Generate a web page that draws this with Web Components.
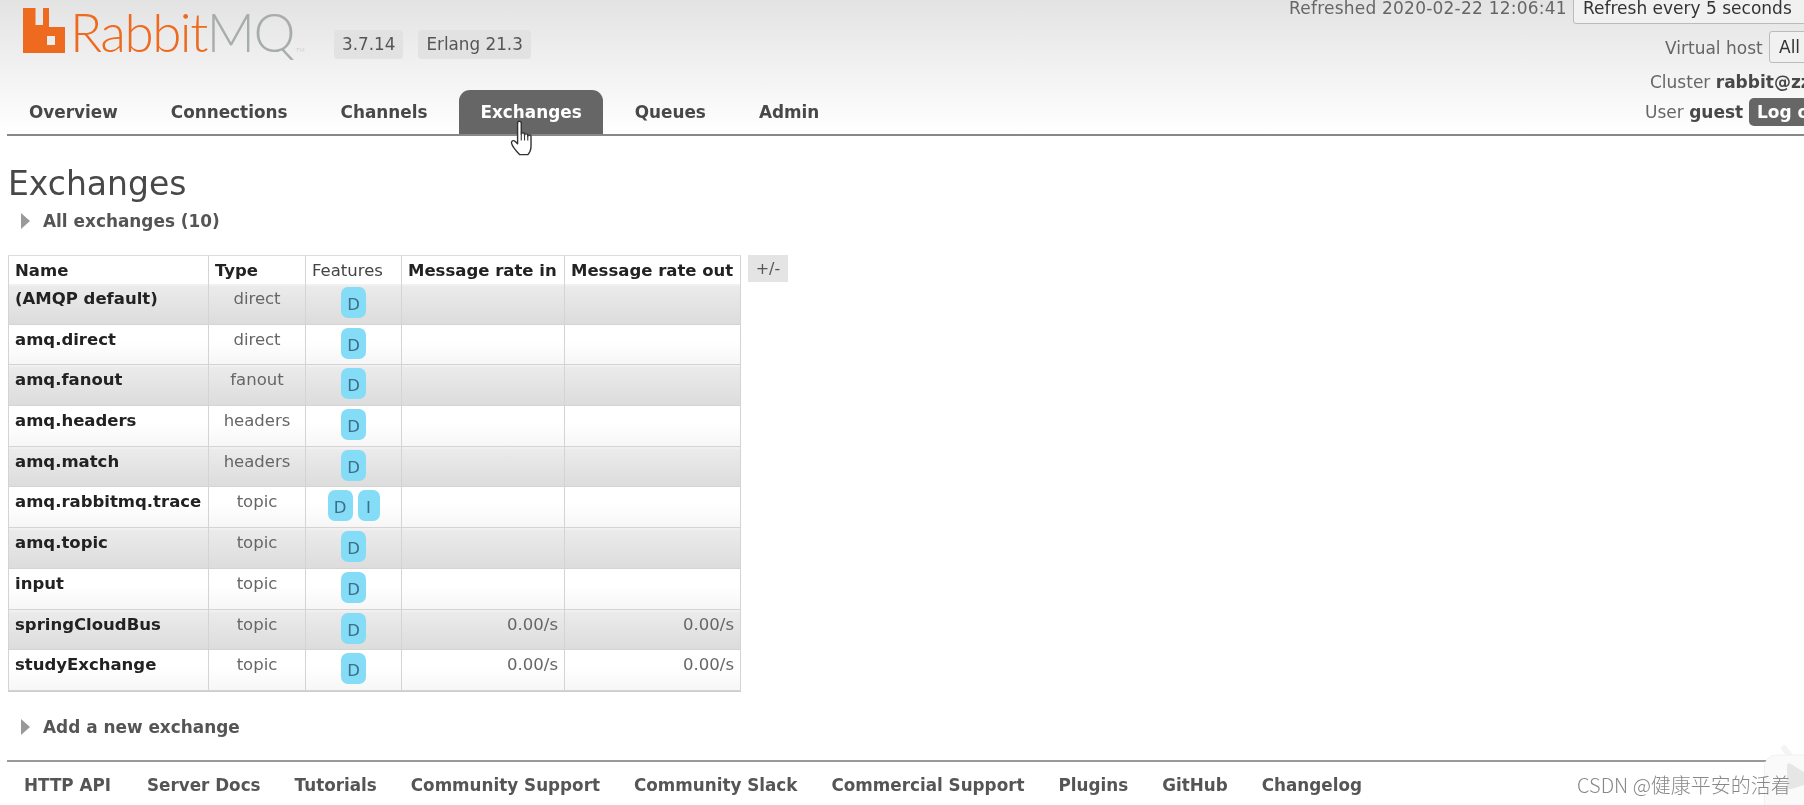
<!DOCTYPE html>
<html>
<head>
<meta charset="utf-8">
<title>RabbitMQ Management</title>
<style>
    html, body { margin: 0; height: 100%; background: #fff; overflow: hidden; }
    body { font-family: "DejaVu Sans", Verdana, sans-serif; color: #484848; filter: blur(0.35px); }
</style>
</head>
<body>
<rmq-header>
    <rmq-tab>Overview</rmq-tab>
    <rmq-tab>Connections</rmq-tab>
    <rmq-tab>Channels</rmq-tab>
    <rmq-tab active>Exchanges</rmq-tab>
    <rmq-tab>Queues</rmq-tab>
    <rmq-tab>Admin</rmq-tab>
</rmq-header>
<rmq-main></rmq-main>
<rmq-footer>
    <a>HTTP API</a><a>Server Docs</a><a>Tutorials</a><a>Community Support</a><a>Community Slack</a><a>Commercial Support</a><a>Plugins</a><a>GitHub</a><a>Changelog</a>
</rmq-footer>
<rmq-watermark>CSDN @健康平安的活着</rmq-watermark>

<script>
class RmqTab extends HTMLElement {
    constructor() {
        super();
        this.attachShadow({ mode: 'open' }).innerHTML = `
            <style>
                :host {
                    display: block;
                    height: 44px;
                    line-height: 44px;
                    padding: 0 21px;
                    margin-right: 11px;
                    font-size: 16.85px;
                    font-weight: bold;
                    color: #484848;
                    border-radius: 11px 11px 0 0;
                    white-space: nowrap;
                }
                :host([active]) { background: #666; color: #fff; }
            </style>
            <slot></slot>
        `;
    }
}
customElements.define('rmq-tab', RmqTab);

class RmqHeader extends HTMLElement {
    constructor() {
        super();
        this.attachShadow({ mode: 'open' }).innerHTML = `
            <style>
                :host {
                    display: block;
                    position: relative;
                    height: 134px;
                    margin: 0 0 0 7px;
                    border-bottom: 2px solid #888;
                }
                .bg {
                    position: absolute;
                    left: -7px; right: 0; top: 0; bottom: 0;
                    background: linear-gradient(#e3e3e3, #fff);
                }
                .top {
                    position: relative;
                    display: flex;
                    height: 90px;
                    align-items: flex-start;
                }
                .logo {
                    display: flex;
                    align-items: flex-start;
                    margin: 8px 0 0 16px;
                    height: 45px;
                    width: 311px;
                }
                .word {
                    font-family: "Lato", sans-serif;
                    font-weight: 300;
                    font-size: 53px;
                    line-height: 47px;
                    letter-spacing: -1.5px;
                    margin-left: 5px;
                    color: #ee6a1e;
                    white-space: nowrap;
                }
                .word span { color: #a8acac; }
                .word small { font-size: 6px; letter-spacing: 0; color: #bbb; margin-left: 2px; }
                .ver {
                    margin: 30px 15px 0 0;
                    font-size: 16.8px;
                    height: 29px;
                    line-height: 29px;
                    padding: 0 8px;
                    background: #e2e2e2;
                    border-radius: 4px;
                    color: #555;
                }
                .tabs {
                    position: relative;
                    display: flex;
                    padding-left: 1px;
                }
                .right {
                    position: absolute;
                    top: 0; right: 0;
                    left: 1240px;
                    bottom: 0;
                    overflow: hidden;
                    font-size: 17px;
                    line-height: 20px;
                    color: #666;
                }
                .line {
                    position: absolute;
                    white-space: nowrap;
                }
                .box {
                    display: inline-block;
                    background: #f1f1f1;
                    border: 1px solid #bbb;
                    border-radius: 3px;
                    color: #333;
                    padding: 0 9px;
                    line-height: 30px;
                }
                b { color: #484848; }
                .btn {
                    display: inline-block;
                    background: #666;
                    color: #fff;
                    font-weight: bold;
                    border-radius: 5px;
                    padding: 0 8px;
                    line-height: 28px;
                }
            </style>
            <div class="bg"></div>
            <div class="top">
                <div class="logo">
                    <svg width="42" height="45" viewBox="0 0 42 45"><path fill="#ee6a1e" fill-rule="evenodd" d="M0 0h12.500v17H20V0h6v19h16v26H0zM24 28v9h8v-9z"/></svg>
                    <div class="word">Rabbit<span>MQ</span><small>TM</small></div>
                </div>
                <div class="ver">3.7.14</div>
                <div class="ver">Erlang 21.3</div>
            </div>
            <div class="tabs"><slot></slot></div>
            <div class="right">
                <div class="line" style="left:42px;top:-2px;letter-spacing:.22px">Refreshed 2020-02-22 12:06:41</div>
                <div class="line" style="left:326px;top:-8px"><span class="box" style="width:230px;">Refresh every 5 seconds</span></div>
                <div class="line" style="left:418px;top:38px">Virtual host</div>
                <div class="line" style="left:522px;top:31px"><span class="box" style="width:80px;">All</span></div>
                <div class="line" style="left:403px;top:72px">Cluster <b>rabbit@zzz</b></div>
                <div class="line" style="left:398px;top:102px">User <b>guest</b></div>
                <div class="line" style="left:502px;top:98px"><span class="btn" style="width:70px;">Log out</span></div>
            </div>
        `;
    }
}
customElements.define('rmq-header', RmqHeader);

// One row of the exchanges table: the feature badges are a comma list
class RmqRow extends HTMLElement {
    connectedCallback() {
        const name = this.getAttribute('name');
        const type = this.getAttribute('type');
        const features = (this.getAttribute('features') || 'D').split(',');
        const rate = this.getAttribute('rate') || '';
        const odd = this.hasAttribute('odd');
        this.attachShadow({ mode: 'open' }).innerHTML = `
            <style>
                :host {
                    display: grid;
                    grid-template-columns: 201px 97px 96px 163px 176px;
                    height: 40.7px;
                    box-sizing: border-box;
                    font-size: 16.5px;
                    background: ${odd ? 'linear-gradient(#ececec 0%, #dcdcdc 100%)' : 'linear-gradient(#fff 40%, #f6f6f6 100%)'};
                    box-shadow: inset 0 -1px 0 #d4d4d4, inset 0 2px 0 ${odd ? '#f0f0f0' : '#fff'};
                }
                div { border-right: 1px solid #d4d4d4; padding: 6px 6px 0; line-height: 18px; white-space: nowrap; }
                .name { font-weight: bold; color: #222; border-left: 1px solid #d4d4d4; }
                .type { text-align: center; color: #666; }
                .feat { display: flex; justify-content: center; gap: 5px; padding: 3px 0 0; }
                .rate { text-align: right; color: #666; }
                span {
                    display: block;
                    width: 25px;
                    height: 31px;
                    line-height: 35px;
                    text-align: center;
                    background: #84dcf6;
                    color: #3f6f88;
                    border-radius: 7px;
                }
                span.narrow { width: 22px; }
            </style>
            <div class="name">${name}</div>
            <div class="type">${type}</div>
            <div class="feat">${features.map(f => `<span class="${f === 'I' ? 'narrow' : ''}">${f}</span>`).join('')}</div>
            <div class="rate">${rate}</div>
            <div class="rate">${rate}</div>
        `;
    }
}
customElements.define('rmq-row', RmqRow);

class RmqToggle extends HTMLElement {
    constructor() {
        super();
        this.attachShadow({ mode: 'open' }).innerHTML = `
            <style>
                :host {
                    display: flex;
                    align-items: center;
                    gap: 13px;
                    padding-left: 13px;
                    font-size: 16.9px;
                    font-weight: bold;
                    color: #555;
                }
                i {
                    width: 0; height: 0;
                    border-left: 9px solid #999;
                    border-top: 8px solid transparent;
                    border-bottom: 8px solid transparent;
                }
            </style>
            <i></i><slot></slot>
        `;
    }
}
customElements.define('rmq-toggle', RmqToggle);

const ROWS = [
    ['(AMQP default)', 'direct', 'D'],
    ['amq.direct', 'direct', 'D'],
    ['amq.fanout', 'fanout', 'D'],
    ['amq.headers', 'headers', 'D'],
    ['amq.match', 'headers', 'D'],
    ['amq.rabbitmq.trace', 'topic', 'D,I'],
    ['amq.topic', 'topic', 'D'],
    ['input', 'topic', 'D'],
    ['springCloudBus', 'topic', 'D', '0.00/s'],
    ['studyExchange', 'topic', 'D', '0.00/s'],
];

class RmqMain extends HTMLElement {
    constructor() {
        super();
        const rows = ROWS.map((r, i) =>
            `<rmq-row ${i % 2 ? '' : 'odd'} name="${r[0]}" type="${r[1]}" features="${r[2]}" rate="${r[3] || ''}"></rmq-row>`
        ).join('');
        this.attachShadow({ mode: 'open' }).innerHTML = `
            <style>
                :host { display: block; padding: 0 0 0 8px; position: relative; }
                h1 {
                    margin: 0;
                    padding-top: 25px;
                    height: 46px;
                    line-height: 46px;
                    font-size: 33px;
                    font-weight: normal;
                    color: #484848;
                }
                rmq-toggle { height: 27px; }
                .wrap { display: flex; align-items: flex-start; gap: 7px; margin-top: 21px; }
                .table { width: 733px; border-bottom: 1px solid #ccc; }
                .head {
                    display: grid;
                    grid-template-columns: 201px 97px 96px 163px 176px;
                    height: 29px;
                    font-size: 16.5px;
                    line-height: 29px;
                    font-weight: bold;
                    color: #222;
                    box-sizing: border-box;
                    border-top: 1px solid #ddd;
                }
                .head div { padding: 0 6px; border-right: 1px solid #d4d4d4; white-space: nowrap; }
                .head div:first-child { border-left: 1px solid #d4d4d4; }
                .head .plain { font-weight: normal; color: #444; }
                .pm {
                    background: #e4e4e4;
                    color: #555;
                    font-size: 16px;
                    width: 40px;
                    height: 27px;
                    line-height: 27px;
                    text-align: center;
                }
                .add { margin-top: 20px; height: 30px; margin-bottom: 18px; }
                .cursor { position: absolute; left: 510px; top: -16px; }
            </style>
            <h1>Exchanges</h1>
            <rmq-toggle>All exchanges (10)</rmq-toggle>
            <div class="wrap">
                <div class="table">
                    <div class="head">
                        <div>Name</div><div>Type</div><div class="plain">Features</div><div>Message rate in</div><div>Message rate out</div>
                    </div>
                    ${rows}
                </div>
                <div class="pm">+/-</div>
            </div>
            <rmq-toggle class="add">Add a new exchange</rmq-toggle>
            <svg class="cursor" width="26" height="39" viewBox="0 0 24 36">
                <path fill="#fff" stroke="#333" stroke-width="1.3" stroke-linejoin="round" d="M7 3c0-2.400 3.400-2.400 3.400 0v10c0-1.600 3-1.600 3 0v1c0-1.600 3-1.600 3 0v1c0-1.600 3-1.500 3 .2V24c0 4-2 7-3 8H9c-2-2-7-8-7.600-10.600C1 19.500 3 18 5 20l2 2z"/>
                <path fill="none" stroke="#333" stroke-width="1" d="M10.400 13v6M13.400 14v5M16.400 15v4"/>
            </svg>
        `;
    }
}
customElements.define('rmq-main', RmqMain);

class RmqFooter extends HTMLElement {
    constructor() {
        super();
        this.attachShadow({ mode: 'open' }).innerHTML = `
            <style>
                :host {
                    display: flex;
                    gap: 34px;
                    margin: 0 0 0 7px;
                    padding: 13px 0 0 17px;
                    border-top: 2px solid #999;
                    font-size: 16.8px;
                    font-weight: bold;
                    color: #555;
                    white-space: nowrap;
                }
                ::slotted(a:first-child) { margin-right: 2px; }
            </style>
            <slot></slot>
        `;
    }
}
customElements.define('rmq-footer', RmqFooter);

class RmqWatermark extends HTMLElement {
    constructor() {
        super();
        this.attachShadow({ mode: 'open' }).innerHTML = `
            <style>
                :host {
                    position: absolute;
                    left: 1577px;
                    top: 772px;
                    font-family: "Noto Sans CJK SC", sans-serif;
                    font-size: 20px;
                    font-weight: 300;
                    line-height: 26px;
                    color: #888;
                    white-space: nowrap;
                }
                svg { position: absolute; left: 187px; top: -27px; }
                span { position: relative; }
            </style>
            <svg width="40" height="60" viewBox="0 0 40 60">
                <path fill="none" stroke="#f4f4f4" stroke-width="6" stroke-linecap="round" d="M27 12 L20 3"/>
                <rect x="0.500" y="10" width="60" height="60" rx="12" fill="#fafafa" stroke="#f0f0f0"/>
                <path fill="#e6e6e6" d="M23 20 Q24 17 27 19 L40 27 V40 L27 44 Q23 45 23 41z"/>
            </svg>
            <span><slot></slot></span>
        `;
    }
}
customElements.define('rmq-watermark', RmqWatermark);
</script>
</body>
</html>
